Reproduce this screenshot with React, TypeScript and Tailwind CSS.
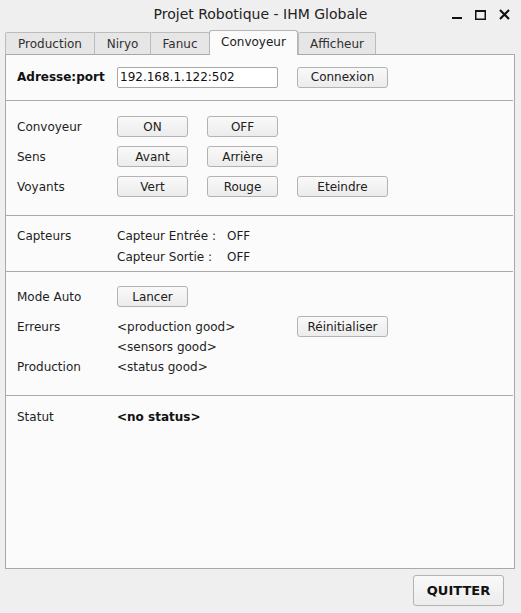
import React from "react";

const F = { fontFamily: '"DejaVu Sans", "Liberation Sans", sans-serif' };

function Btn({ children, w = "w-[71px]" }: { children: React.ReactNode; w?: string }) {
  return (
    <button
      className={`${w} h-[21px] shrink-0 rounded-[3px] border border-[#b3b3b3] bg-linear-to-b from-[#f9f9f9] to-[#ececec] text-[12px] leading-none text-[#202020] flex items-center justify-center`}
    >
      {children}
    </button>
  );
}

function Tab({ label, w, active }: { label: string; w: string; active?: boolean }) {
  if (active) {
    return (
      <div
        className={`${w} h-[25px] -mb-px relative z-10 flex items-center justify-center rounded-t-[3px] border border-b-0 border-[#b5b5b5] bg-[#fbfbfb] text-[12px] text-[#202020]`}
      >
        <span className="-mt-[2px]">{label}</span>
      </div>
    );
  }
  return (
    <div
      className={`${w} h-[22px] flex items-center justify-center rounded-t-[2px] border border-b-0 border-[#bcbcbc] bg-[#e6e6e6] text-[12px] text-[#303030] -mr-px`}
    >
      {label}
    </div>
  );
}

export default function App() {
  return (
    <div className="w-[521px] h-[613px] bg-[#efefef] flex flex-col overflow-hidden text-[#1e1e1e]" style={F}>
      {/* title bar */}
      <div className="h-[30px] relative flex items-center justify-center shrink-0">
        <span className="text-[14px] text-[#222] -mt-[2px]">Projet Robotique - IHM Globale</span>
        <div className="absolute right-[11px] top-[9px] flex items-center gap-[13px]">
          <svg width="10" height="11" viewBox="0 0 10 11"><rect x="0" y="8" width="10" height="2" fill="#111" /></svg>
          <svg width="11" height="10" viewBox="0 0 11 10"><rect x="0.75" y="0.75" width="9.5" height="8.5" fill="none" stroke="#111" strokeWidth="1.5" /><rect x="0" y="0" width="11" height="2" fill="#111" /></svg>
          <svg width="11" height="11" viewBox="0 0 11 11"><path d="M1 1 L10 10 M10 1 L1 10" stroke="#111" strokeWidth="2.2" /></svg>
        </div>
      </div>
      {/* tabs */}
      <div className="h-[24px] flex items-end pl-[5px] shrink-0">
        <Tab label="Production" w="w-[90px]" />
        <Tab label="Niryo" w="w-[57px]" />
        <Tab label="Fanuc" w="w-[60px]" />
        <Tab label="Convoyeur" w="w-[89px]" active />
        <Tab label="Afficheur" w="w-[78px]" />
      </div>
      {/* pane */}
      <div className="mx-[5px] w-[510px] h-[515px] shrink-0 border border-[#a9a9a9] bg-[#fbfbfb] flex flex-col text-[12px]">
        {/* section 1 */}
        <div className="pt-[11px] pb-[12px] pl-[11px] flex items-center h-[45px]">
          <span className="w-[100px] font-bold text-[#111]">Adresse:port</span>
          <div className="w-[161px] h-[21px] rounded-[2px] border border-[#a8a8a8] bg-white flex items-center pl-[2px] text-[#111]">192.168.1.122:502</div>
          <div className="w-[19px]" />
          <Btn w="w-[91px]">Connexion</Btn>
        </div>
        <div className="h-px bg-[#a9a9a9] mr-px" />
        {/* section 2 */}
        <div className="pt-[15px] pb-[18px] pl-[11px] flex flex-col gap-[9px]">
          <div className="flex items-center h-[21px]">
            <span className="w-[100px]">Convoyeur</span>
            <Btn>ON</Btn>
            <div className="w-[19px]" />
            <Btn>OFF</Btn>
          </div>
          <div className="flex items-center h-[21px]">
            <span className="w-[100px]">Sens</span>
            <Btn>Avant</Btn>
            <div className="w-[19px]" />
            <Btn>Arrière</Btn>
          </div>
          <div className="flex items-center h-[21px]">
            <span className="w-[100px]">Voyants</span>
            <Btn>Vert</Btn>
            <div className="w-[19px]" />
            <Btn>Rouge</Btn>
            <div className="w-[19px]" />
            <Btn w="w-[91px]">Eteindre</Btn>
          </div>
        </div>
        <div className="h-px bg-[#a9a9a9] mr-px" />
        {/* section 3 */}
        <div className="pt-[10px] pb-[4px] pl-[11px] flex flex-col">
          <div className="flex items-center h-[20px]">
            <span className="w-[100px]">Capteurs</span>
            <span className="w-[110px]">Capteur Entrée :</span>
            <span>OFF</span>
          </div>
          <div className="flex items-center h-[20px] mt-[1px]">
            <span className="w-[100px]"></span>
            <span className="w-[110px]">Capteur Sortie :</span>
            <span>OFF</span>
          </div>
        </div>
        <div className="h-px bg-[#a9a9a9] mr-px" />
        {/* section 4 */}
        <div className="pt-[14px] pb-[18px] pl-[11px] flex flex-col">
          <div className="flex items-center h-[21px]">
            <span className="w-[100px]">Mode Auto</span>
            <Btn>Lancer</Btn>
          </div>
          <div className="flex items-center h-[21px] mt-[9px]">
            <span className="w-[100px]">Erreurs</span>
            <span className="w-[180px]">&lt;production good&gt;</span>
            <Btn w="w-[91px]">Réinitialiser</Btn>
          </div>
          <div className="flex items-center h-[20px]">
            <span className="w-[100px]"></span>
            <span>&lt;sensors good&gt;</span>
          </div>
          <div className="flex items-center h-[20px]">
            <span className="w-[100px]">Production</span>
            <span>&lt;status good&gt;</span>
          </div>
        </div>
        <div className="h-px bg-[#a9a9a9] mr-px" />
        {/* section 5 */}
        <div className="pt-[11px] pl-[11px] flex items-center h-[31px]">
          <span className="w-[100px]">Statut</span>
          <span className="font-bold text-[#111]">&lt;no status&gt;</span>
        </div>
      </div>
      {/* bottom */}
      <div className="flex-1 flex items-start justify-end pr-[17px] pt-[6px]">
        <button className="w-[91px] h-[31px] rounded-[3px] border border-[#b3b3b3] bg-linear-to-b from-[#f9f9f9] to-[#ececec] text-[13px] font-bold text-[#111] flex items-center justify-center">
          QUITTER
        </button>
      </div>
    </div>
  );
}
